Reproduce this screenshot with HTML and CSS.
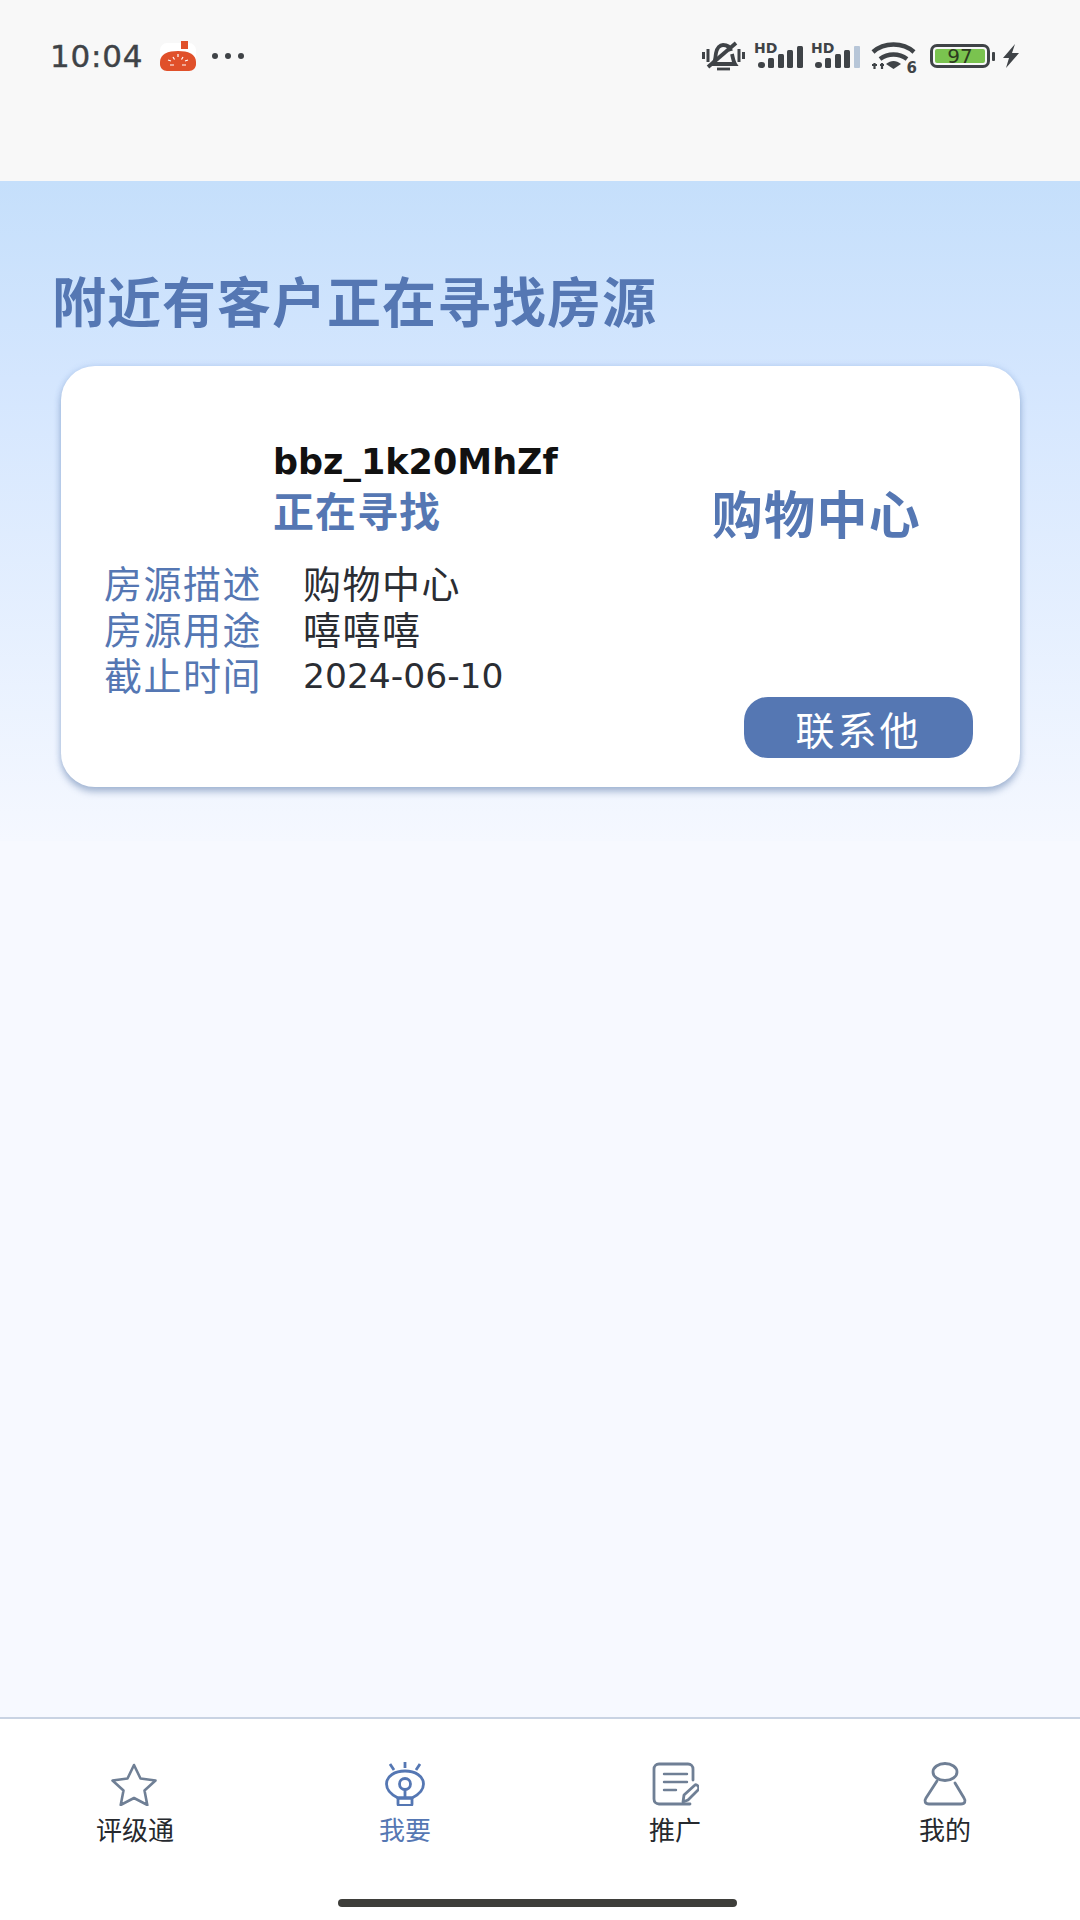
FILE: index.html
```html
<!DOCTYPE html>
<html lang="zh">
<head>
<meta charset="utf-8">
<title>我要</title>
<link rel="stylesheet" href="styles.css">
</head>
<body>
<div class="phone">
  <header class="status">
    <div class="status-left">
      <span class="time">10:04</span>
      <svg class="app-icon" width="36" height="30" viewBox="0 0 36 30"><rect x="0" y="2" width="36" height="28" rx="7" fill="#fff"/><rect x="21" y="0" width="7" height="8" fill="#e0502a"/><path d="M0 21C0 13 8 10 18 10s18 3 18 11v2c0 4-3 7-7 7H7c-4 0-7-3-7-7z" fill="#e0502a"/><path d="M18 13v3M8 19l3 1M28 19l-3 1M10 24h4M22 24h4M13 16l1.500 2.500M23 16l-1.500 2.500" stroke="#fff" stroke-width="1.200"/></svg>
      <span class="dots"><i></i><i></i><i></i></span>
    </div>
    <div class="status-right">
      <svg class="ic-mute" width="43" height="32" viewBox="0 0 43 32" fill="none" stroke="#3f4347"><path d="M11 24c3-3 2-6 3-11 1-5 4-8 7-8 4 0 7 2 8 6M30 14c1 4 1 7 3 10H9" stroke-width="3.800"/><path d="M15 29h13" stroke-width="2.800"/><path d="M1.500 12v7M6 9v13M37 9v13M41.500 12v7" stroke-width="3"/><path d="M6 27 34 3" stroke-width="3.800"/></svg>
      <div class="signal"><span class="hd">HD</span><svg width="45" height="23" viewBox="0 0 45 23" fill="#3f4347"><rect x="0" y="17" width="7" height="6" rx="3"/><rect x="10" y="13" width="6" height="10" rx="1.500"/><rect x="20" y="9" width="6" height="14" rx="1.500"/><rect x="29" y="5" width="6" height="18" rx="1.500"/><rect x="39" y="1" width="6" height="22" rx="1.500"/></svg></div>
      <div class="signal"><span class="hd">HD</span><svg width="45" height="23" viewBox="0 0 45 23" fill="#3f4347"><rect x="0" y="17" width="7" height="6" rx="3"/><rect x="10" y="13" width="6" height="10" rx="1.500"/><rect x="20" y="9" width="6" height="14" rx="1.500"/><rect x="29" y="5" width="6" height="18" rx="1.500"/><rect x="39" y="1" width="6" height="22" rx="1" fill="#b7c6d8"/></svg></div>
      <div class="wifi"><svg width="45" height="30" viewBox="0 0 45 30" fill="none" stroke="#3f4347" stroke-width="4.400"><path d="M2 11C13 1 32 1 43 11M9 18c8-6 19-6 27 0"/><path d="M15 23c5-4 10-4 15 0l-7.500 5z" fill="#3f4347" stroke="none"/><path d="M1 24h5M3.500 22v6M9 24h4M11 22v6" stroke-width="2.200"/></svg><span class="wifi-six">6</span></div>
      <div class="battery"><div class="battery-body"><span class="battery-level">97</span></div><i class="battery-cap"></i></div>
      <svg class="bolt" width="18" height="24" viewBox="0 0 18 24"><path d="M13 0 1 14h6L4 24 17 9h-7z" fill="#3f4347"/></svg>
    </div>
  </header>

  <main class="content">
    <h1 class="title">附近有客户正在寻找房源</h1>
    <section class="card">
      <div class="card-head">
        <div class="who">
          <div class="name">bbz_1k20MhZf</div>
          <div class="seeking">正在寻找</div>
        </div>
        <div class="kind">购物中心</div>
      </div>
      <dl class="facts">
        <div class="fact"><dt>房源描述</dt><dd>购物中心</dd></div>
        <div class="fact"><dt>房源用途</dt><dd>嘻嘻嘻</dd></div>
        <div class="fact"><dt>截止时间</dt><dd class="date">2024-06-10</dd></div>
      </dl>
      <div class="actions"><button class="contact">联系他</button></div>
    </section>
  </main>

  <nav class="tabs">
    <div class="tab">
      <svg class="shift" width="50" height="44" viewBox="0 0 50 44" fill="none" stroke="#6f7f95" stroke-width="2.600" stroke-linejoin="round"><path d="M25 3l6.500 13.500 15 2-11 10 2.800 14.500L25 36l-13.300 7 2.800-14.500-11-10 15-2z"/></svg>
      <span>评级通</span>
    </div>
    <div class="tab active">
      <svg width="50" height="44" viewBox="0 0 50 44" fill="none" stroke="#5577b3" stroke-width="2.800"><path d="M25 0v6M10 2l4 6M40 2l-4 6"/><path d="M18 36C12 33 6.500 29 6.500 22 6.500 14 15 9 25 9s18.500 5 18.500 13c0 7-5.500 11-11.500 14z"/><circle cx="25" cy="22" r="5.500"/><path d="M25 27.500V36M18 36h14v6c0 1-1 1.500-2 1.500H20c-1 0-2-.5-2-1.500z"/></svg>
      <span>我要</span>
    </div>
    <div class="tab">
      <svg class="shift" width="50" height="44" viewBox="0 0 50 44" fill="none" stroke="#6f7f95" stroke-width="2.800" stroke-linecap="round" stroke-linejoin="round"><path d="M44 18V7c0-3-2-5-5-5H10C7 2 5 4 5 7v30c0 3 2 5 5 5h31"/><path d="M15 12h23M15 20h23M15 28h12" stroke-width="2.400"/><path d="M34 40l1-7 11-10c1-1 2 0 3 1s1 3 0 4L39 38z" fill="#fff"/></svg>
      <span>推广</span>
    </div>
    <div class="tab">
      <svg width="50" height="44" viewBox="0 0 50 44" fill="none" stroke="#6f7f95" stroke-width="2.800" stroke-linecap="round"><ellipse cx="25" cy="10" rx="12" ry="8.500"/><path d="M17 19 6 36c-2 3-1 6 3 6h32c4 0 5-3 3-6L35 21"/></svg>
      <span>我的</span>
    </div>
  </nav>
  <div class="home-bar"><i></i></div>
</div>
</body>
</html>
```
FILE: styles.css
```css
* { box-sizing: border-box; }
html, body { margin: 0; padding: 0; }
body { width: 1080px; height: 1920px; overflow: hidden; font-family: "DejaVu Sans", "Noto Sans CJK SC", sans-serif; background: #f7f9ff; }
.phone { width: 1080px; height: 1920px; display: flex; flex-direction: column; }

.status { height: 181px; flex: none; background: #f8f8f8; display: flex; justify-content: space-between; align-items: flex-start; padding: 40px 60px 0 50px; color: #3f4347; }
.status-left { display: flex; align-items: center; height: 32px; }
.time { font-size: 31px; line-height: 32px; letter-spacing: 0.8px; font-weight: 500; width: 110px; -webkit-text-stroke: 0.4px #3f4347; }
.app-icon { display: block; }
.dots { display: flex; gap: 7px; margin-left: 16px; }
.dots i { width: 6px; height: 6px; border-radius: 50%; background: #3f4347; }
.status-right { display: flex; align-items: center; height: 32px; }
.ic-mute { margin-right: 10px; }
.signal { position: relative; width: 48px; height: 32px; margin-right: 9px; display: flex; align-items: flex-end; justify-content: flex-end; padding-bottom: 4px; }
.hd { position: absolute; left: -1px; top: 1px; font: 800 14px/15px "DejaVu Sans", sans-serif; }
.wifi { position: relative; width: 45px; height: 30px; margin-left: 2px; margin-right: 14px; }
.wifi svg { display: block; }
.wifi-six { position: absolute; right: -1px; bottom: -5px; font: 700 15px/15px "DejaVu Sans", sans-serif; }
.battery { display: flex; align-items: center; margin-right: 7px; }
.battery-body { width: 60px; height: 24px; border: 3px solid #3f4347; border-radius: 7px; padding: 2px; display: flex; }
.battery-level { flex: 1; background: #7ac34f; border-radius: 2px; font: 400 20px/14px "DejaVu Sans", sans-serif; text-align: center; color: #2c3a20; }
.battery-cap { width: 3px; height: 9px; margin-left: 2px; background: #3f4347; border-radius: 1px; }
.bolt { display: block; }

.content { flex: 1; background: linear-gradient(180deg, #c5dffb 0%, #d4e6fe 30%, #f5f8ff 100%) top / 100% 660px no-repeat, #f7f9ff; padding: 94px 60px 0 61px; }
.title { margin: 0 0 0 -9px; font-size: 54px; line-height: 60px; font-weight: 700; letter-spacing: 1px; color: #5577b3; }
.card { margin-top: 31px; height: 421px; border-radius: 34px; background: #fff; box-shadow: 0 5px 7px rgba(90, 120, 165, .45), 0 0 6px rgba(120, 160, 220, .3); padding: 71px 47px 0 43px; }
.card-head { display: flex; justify-content: space-between; padding-left: 169px; }
.name { font-size: 35px; line-height: 50px; font-weight: 700; color: #111; }
.seeking { font-size: 41px; line-height: 46px; margin-top: 3px; font-weight: 700; letter-spacing: 1px; color: #5577b3; }
.kind { font-size: 51px; line-height: 56px; font-weight: 700; letter-spacing: 1.300px; color: #5577b3; margin: 52px 52px 0 0; }
.facts { margin: 13px 0 0; }
.fact { display: flex; height: 46px; align-items: center; font-size: 38px; }
dt { width: 199px; color: #5577b3; letter-spacing: 1.500px; }
dd { margin: 0; color: #2a2d33; letter-spacing: 1.500px; font-size: 38px; }
dd.date { letter-spacing: 0; font-size: 34.500px; margin-top: 6px; }
.actions { display: flex; justify-content: flex-end; margin-top: 1px; }
.contact { width: 229px; height: 61px; border: 0; border-radius: 24px; background: #5577b3; color: #fff; font: 400 39px/56px "Noto Sans CJK SC", sans-serif; letter-spacing: 3px; padding: 0; }

.tabs { height: 203px; flex: none; position: relative; background: #fff; border-top: 2px solid #c9d3e3; display: grid; grid-template-columns: repeat(4, 270px); padding: 43px 0 0; align-items: start; justify-content: start; }
.tab { display: flex; flex-direction: column; align-items: center; font-size: 26px; line-height: 30px; color: #26292e; }
.tab svg { display: block; margin-bottom: 10px; }
.tab svg.shift { margin-right: 2px; }
.tab.active { color: #5577b3; }
.home-bar { position: absolute; left: 338px; top: 1899px; }
.home-bar i { display: block; width: 399px; height: 8px; border-radius: 4px; background: #3e3e3a; }
```
